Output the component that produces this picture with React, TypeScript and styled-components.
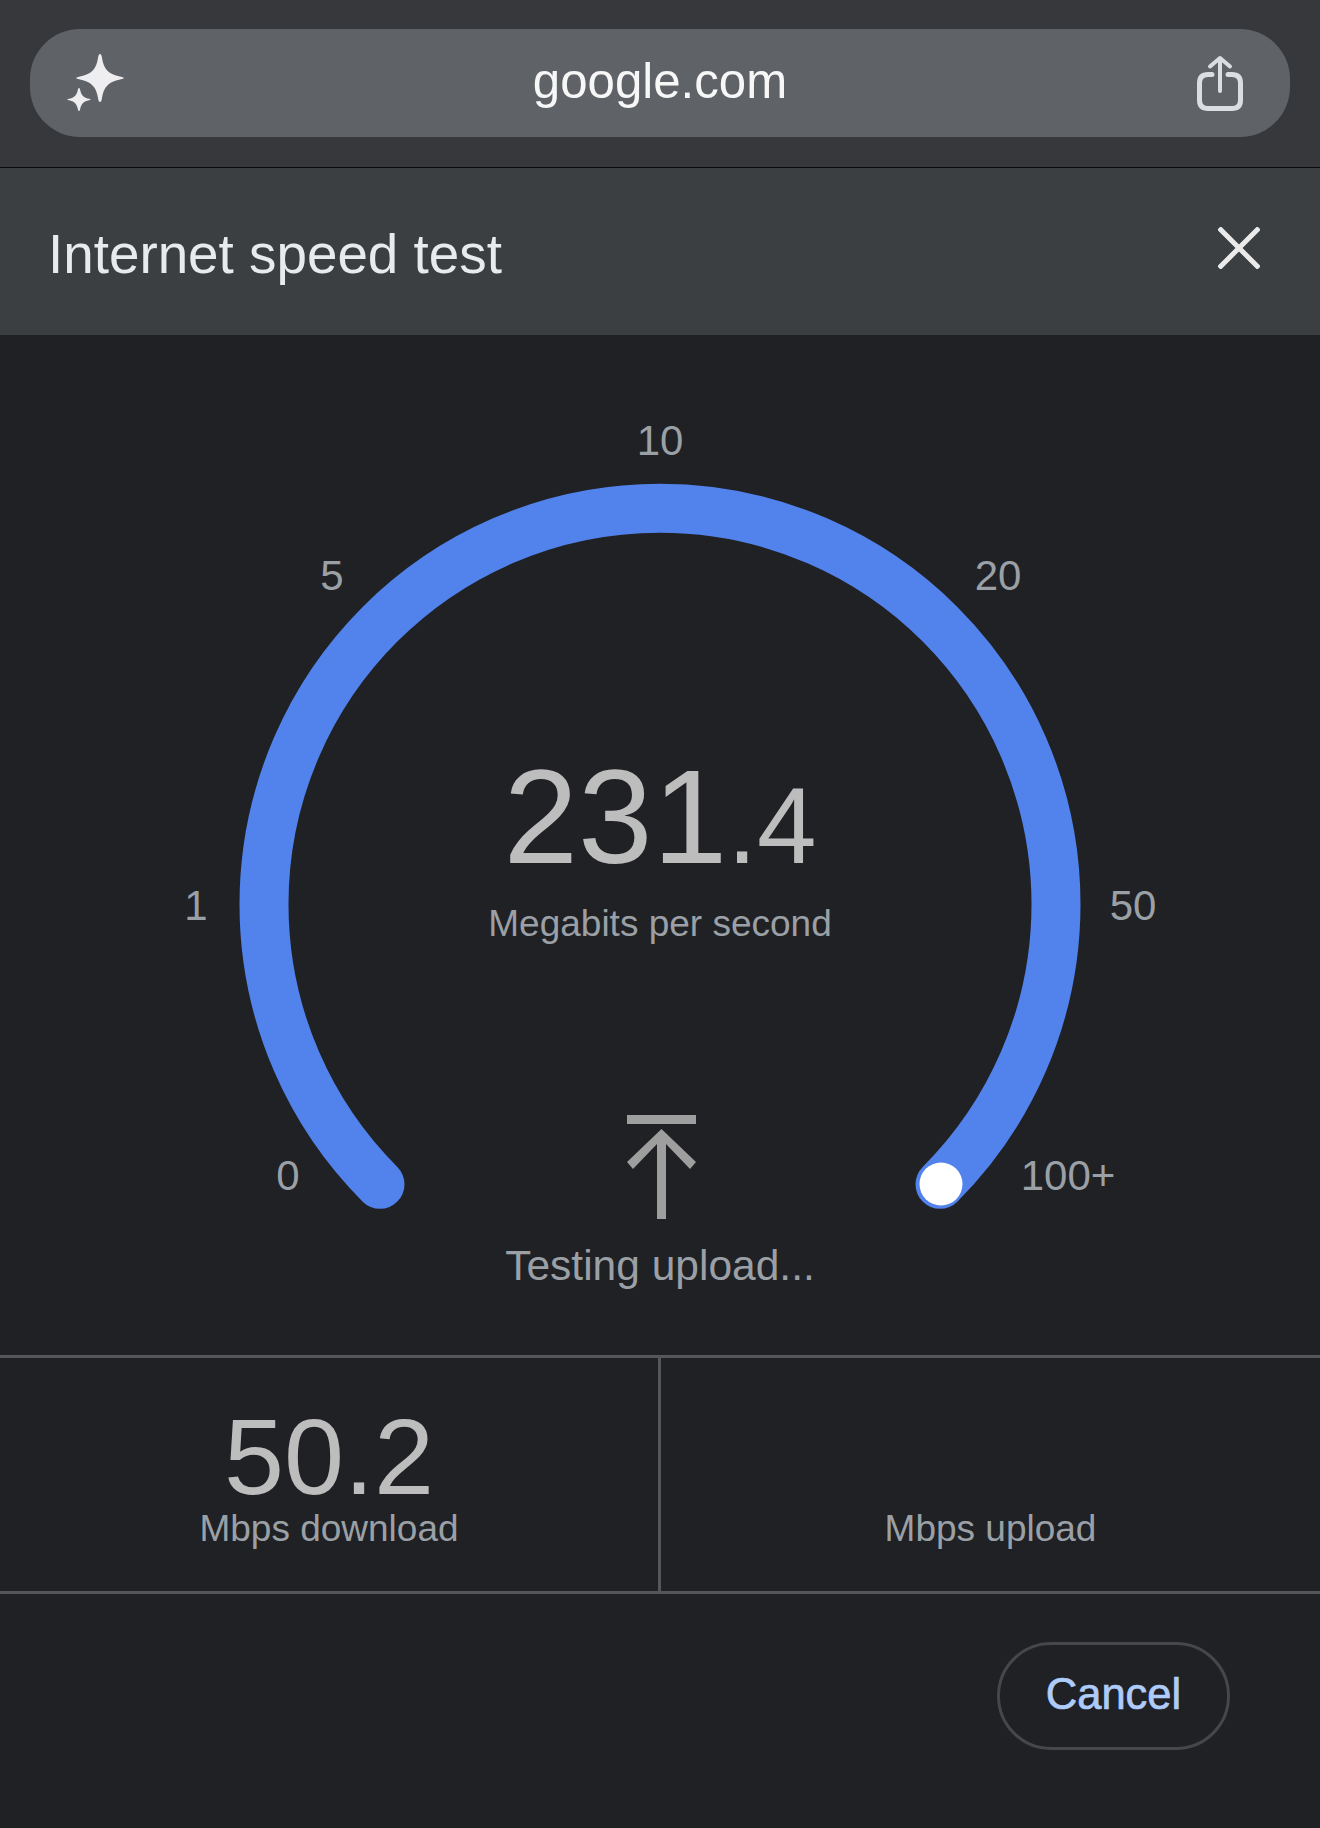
import React from 'react';
import styled, { createGlobalStyle } from 'styled-components';

const GlobalStyle = createGlobalStyle`
  html, body {
    margin: 0;
    background: #202124;
  }
  body {
    font-family: "Liberation Sans", Arial, sans-serif;
  }
`;

const Page = styled.div`
  width: 1320px;
  height: 1828px;
  display: flex;
  flex-direction: column;
  background: #202124;
  overflow: hidden;
`;

const BrowserBar = styled.div`
  flex: none;
  height: 168px;
  box-sizing: border-box;
  padding: 29px 30px 30px;
  background: #37383b;
  border-bottom: 1px solid #0c0c0d;
`;

const AddressPill = styled.div`
  height: 108px;
  border-radius: 50px;
  background: #5f6266;
  display: flex;
  align-items: center;
  justify-content: space-between;
  padding: 0 44px 0 36px;
  position: relative;
`;

const AddressText = styled.span`
  position: absolute;
  left: 0;
  right: 0;
  text-align: center;
  top: 25px;
  font-size: 49.2px;
  line-height: 54px;
  color: #f7f7f8;
`;

const TitleBar = styled.div`
  flex: none;
  height: 167px;
  box-sizing: border-box;
  padding: 0 60px 0 48px;
  background: #3c3f42;
  display: flex;
  align-items: center;
  justify-content: space-between;
`;

const Title = styled.h1`
  margin: 0;
  font-size: 54.8px;
  font-weight: 400;
  line-height: 60px;
  color: #e8eaed;
  padding-top: 4px;
`;

const CloseIcon = styled.svg`
  width: 42px;
  height: 42px;
  margin-top: -8px;
`;

const GaugeArea = styled.div`
  position: relative;
  flex: none;
  height: 1020px;
`;

const GaugeSvg = styled.svg`
  display: block;
  width: 1320px;
  height: 1020px;
`;

const Tick = styled.span<{ $x: number; $y: number }>`
  position: absolute;
  left: ${(p) => p.$x}px;
  top: ${(p) => p.$y}px;
  transform: translate(-50%, -50%);
  font-size: 42px;
  line-height: 48px;
  color: #9aa0a6;
`;

const Readout = styled.div`
  position: absolute;
  left: 0;
  right: 0;
  top: 407px;
  display: flex;
  flex-direction: column;
  align-items: center;
`;

const SpeedValue = styled.div`
  font-size: 134px;
  line-height: 150px;
  color: #bdbdbd;
`;

const SpeedDecimal = styled.span`
  font-size: 107px;
`;

const SpeedUnit = styled.div`
  font-size: 37px;
  line-height: 42px;
  margin-top: 2px;
  color: #9aa0a6;
`;

const StatusBlock = styled.div`
  position: absolute;
  left: 0;
  right: 0;
  top: 779px;
  display: flex;
  flex-direction: column;
  align-items: center;
`;

const UploadIcon = styled.svg`
  display: block;
  width: 72px;
  height: 106px;
  margin-left: 4px;
`;

const StatusText = styled.div`
  margin-top: 23px;
  font-size: 42.5px;
  line-height: 46px;
  color: #9aa0a6;
`;

const StatsRow = styled.div`
  flex: none;
  height: 239px;
  box-sizing: border-box;
  display: grid;
  grid-template-columns: 661px 1fr;
  border-top: 3px solid #54565a;
  border-bottom: 3px solid #54565a;
`;

const StatCell = styled.div<{ $divided?: boolean }>`
  display: flex;
  flex-direction: column;
  align-items: center;
  justify-content: flex-end;
  padding-bottom: 41px;
  ${(p) => p.$divided && 'border-right: 3px solid #54565a;'}
`;

const StatValue = styled.div`
  font-size: 108px;
  line-height: 100px;
  margin-bottom: 1px;
  color: #bdbdbd;
`;

const StatLabel = styled.div`
  font-size: 37px;
  line-height: 42px;
  color: #9aa0a6;
`;

const Footer = styled.div`
  flex: 1;
  display: flex;
  justify-content: flex-end;
  align-items: flex-start;
  padding: 48px 90px 0 0;
`;

const CancelButton = styled.button`
  width: 233px;
  height: 108px;
  border: 3px solid #45474a;
  border-radius: 54px;
  background: transparent;
  color: #aecbfa;
  font-family: "Liberation Sans", Arial, sans-serif;
  font-size: 43.5px;
  -webkit-text-stroke: 0.7px #aecbfa;
  padding: 0 0 3px;
`;

export default function App() {
  return (
    <Page>
      <GlobalStyle />
      <BrowserBar>
        <AddressPill>
          <svg width="60" height="62" viewBox="0 0 60 62">
            <path
              d="M34 2 Q35.500 2 36 6 C37.500 17 43 22.500 54 24.500 Q58 25.500 58 26 Q58 26.500 54 27.500 C43 29.500 37.500 35 36 46 Q35.500 50 34 50 Q32.500 50 32 46 C30.500 35 25 29.500 14 27.500 Q10 26.500 10 26 Q10 25.500 14 24.500 C25 22.500 30.500 17 32 6 Q32.500 2 34 2 Z"
              fill="#eeeef1"
            />
            <path
              d="M13 36 Q14 36 14.200 38 C15 43 18 46 23 46.800 Q25 47.200 25 47.500 Q25 47.800 23 48.200 C18 49 15 52 14.200 57 Q14 59 13 59 Q12 59 11.800 57 C11 52 8 49 3 48.200 Q1 47.800 1 47.500 Q1 47.200 3 46.800 C8 46 11 43 11.800 38 Q12 36 13 36 Z"
              fill="#eeeef1"
            />
          </svg>
          <AddressText>google.com</AddressText>
          <svg width="50" height="58" viewBox="0 0 50 58" fill="none" stroke="#dcdde0" strokeLinecap="round">
            <path d="M16 20.500 H12 Q3.500 20.500 3.500 29 V46 Q3.500 54.500 12 54.500 H36 Q44.500 54.500 44.500 46 V29 Q44.500 20.500 36 20.500 H32" strokeWidth="5" />
            <path d="M24 37 V4 M14 12.500 L24 4 L34 12.500" strokeWidth="4" strokeLinejoin="round" />
          </svg>
        </AddressPill>
      </BrowserBar>

      <TitleBar>
        <Title>Internet speed test</Title>
        <CloseIcon viewBox="0 0 42 42">
          <path d="M1 1 L41 41 M41 1 L1 41" stroke="#eaeaea" strokeWidth="5" fill="none" />
        </CloseIcon>
      </TitleBar>

      <GaugeArea>
        <GaugeSvg viewBox="0 0 1320 1020">
          <path
            d="M380 849.300 A396 396 0 1 1 940 849.300"
            fill="none"
            stroke="#5283ec"
            strokeWidth="49"
            strokeLinecap="round"
          />
          <circle cx="941" cy="849" r="21.500" fill="#fff" />
        </GaugeSvg>
        <Tick $x={660} $y={106}>10</Tick>
        <Tick $x={332} $y={241}>5</Tick>
        <Tick $x={998} $y={241}>20</Tick>
        <Tick $x={196} $y={571}>1</Tick>
        <Tick $x={1133} $y={571}>50</Tick>
        <Tick $x={288} $y={841}>0</Tick>
        <Tick $x={1068} $y={841}>100+</Tick>
        <Readout>
          <SpeedValue>
            231<SpeedDecimal>.4</SpeedDecimal>
          </SpeedValue>
          <SpeedUnit>Megabits per second</SpeedUnit>
        </Readout>
        <StatusBlock>
          <UploadIcon viewBox="0 0 72 106">
            <path d="M1 1 H70 V10 H1 Z" fill="#9e9e9e" />
            <path d="M35.500 15 L70 48 L64 55 L40 30 V105 H31 V30 L7 55 L1 48 Z" fill="#9e9e9e" />
          </UploadIcon>
          <StatusText>Testing upload...</StatusText>
        </StatusBlock>
      </GaugeArea>

      <StatsRow>
        <StatCell $divided>
          <StatValue>50.2</StatValue>
          <StatLabel>Mbps download</StatLabel>
        </StatCell>
        <StatCell>
          <StatLabel>Mbps upload</StatLabel>
        </StatCell>
      </StatsRow>

      <Footer>
        <CancelButton>Cancel</CancelButton>
      </Footer>
    </Page>
  );
}
